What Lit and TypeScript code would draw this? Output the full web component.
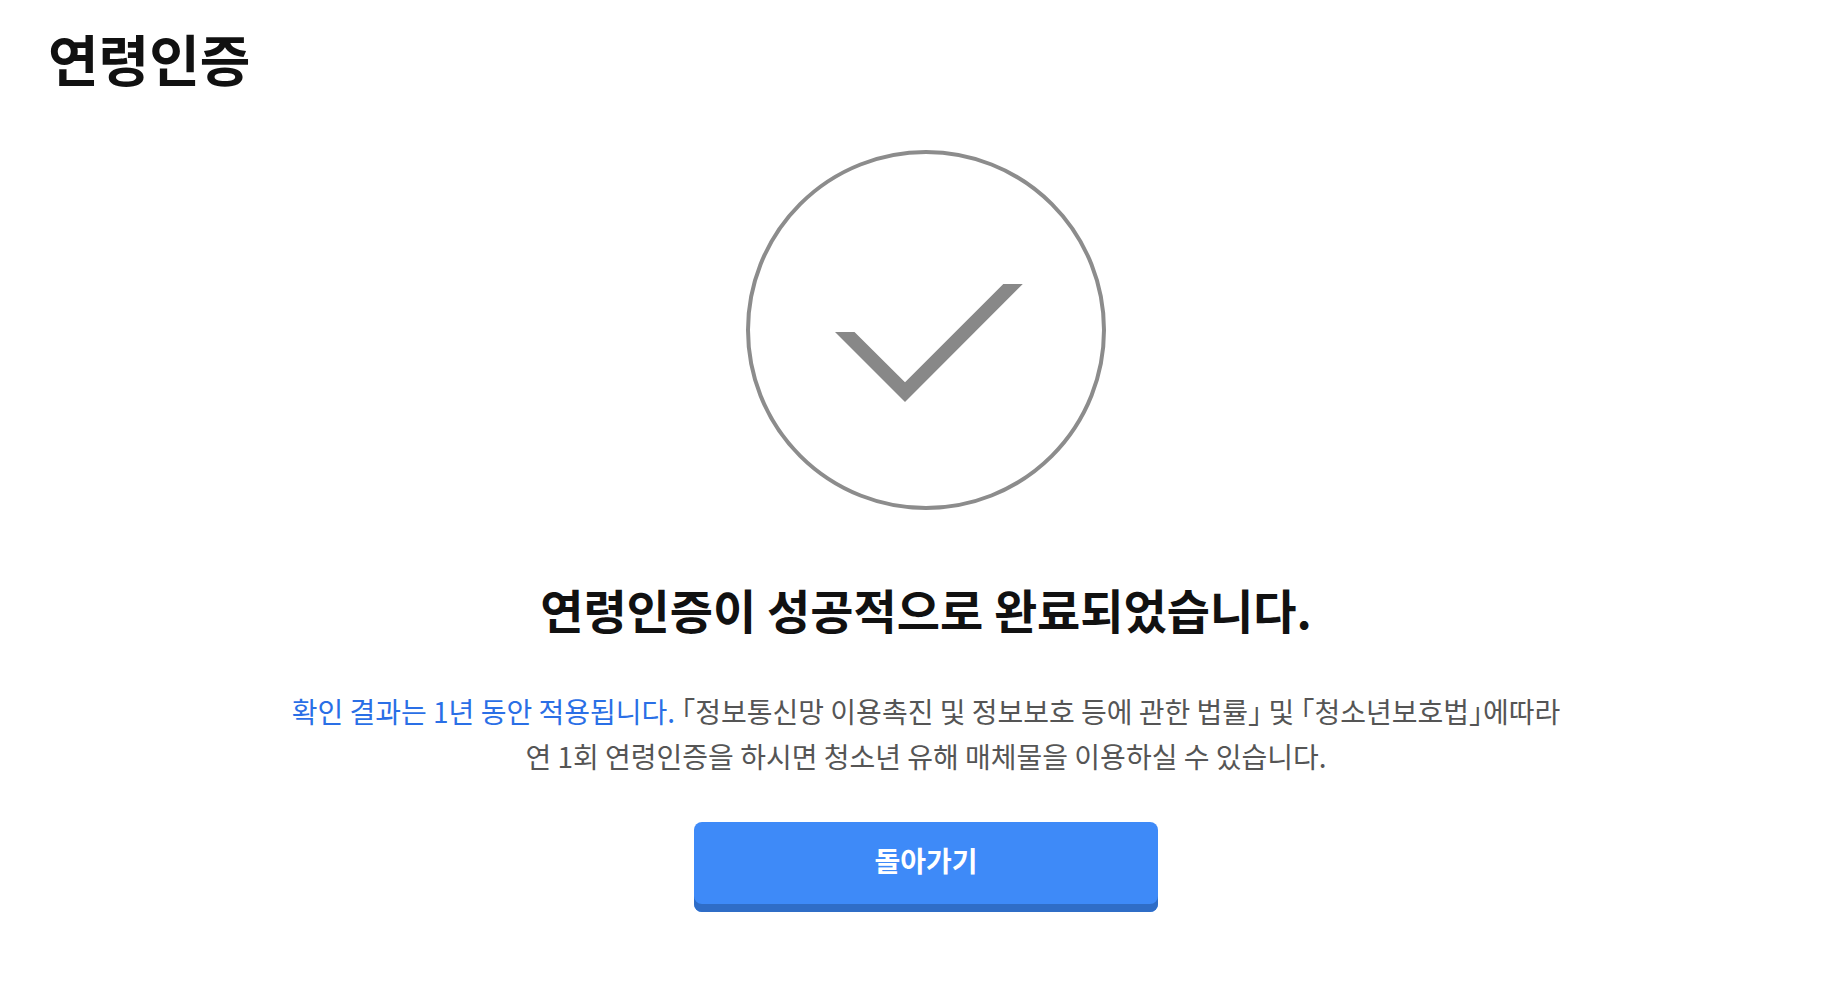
import { LitElement, html, css } from "lit";
import { customElement } from "lit/decorators.js";

@customElement("app-root")
export class AppRoot extends LitElement {
  static styles = css`
    :host {
      display: block;
      background: #fff;
      color: #111;
      font-family: "Noto Sans CJK KR", "Noto Sans", sans-serif;
    }
    .header { padding: 17px 48px 0; }
    .title { margin: 0; font-size: 55px; line-height: 80px; font-weight: 700; }
    .content {
      display: flex;
      flex-direction: column;
      align-items: center;
      padding: 53px 20px 48px 24px;
      text-align: center;
    }
    .icon { display: block; width: 360px; height: 360px; }
    .result { margin: 63px 0 0; font-size: 47px; line-height: 72px; font-weight: 700; }
    .notice {
      margin: 44px 0 0;
      font-size: 28px;
      line-height: 45px;
      font-feature-settings: "halt";
      color: #555;
    }
    .highlight { color: #2a6fe6; }
    .back {
      width: 464px;
      max-width: 100%;
      height: 90px;
      margin: 43px 0 0;
      padding: 0 0 14px;
      border: 0;
      border-radius: 8px;
      background: #3e8af8;
      box-shadow: inset 0 -8px #2f6dc7;
      color: #fff;
      font: inherit;
      font-size: 28px;
      font-weight: 700;
      cursor: pointer;
    }
  `;

  render() {
    return html`
      <header class="header"><h1 class="title">연령인증</h1></header>
      <main class="content">
        <svg class="icon" viewBox="0 0 360 360" aria-hidden="true">
          <circle cx="180" cy="180" r="178" fill="none" stroke="#8c8c8c" stroke-width="4" />
          <path d="M89 182h19.500L159 232.300 257.300 134h19.500L159 252Z" fill="#888" />
        </svg>
        <h2 class="result">연령인증이 성공적으로 완료되었습니다.</h2>
        <p class="notice">
          <span class="highlight">확인 결과는 1년 동안 적용됩니다.</span> 「정보통신망 이용촉진 및 정보보호 등에 관한 법률」 및 「청소년보호법」에따라<br />
          연 1회 연령인증을 하시면 청소년 유해 매체물을 이용하실 수 있습니다.
        </p>
        <button class="back" type="button">돌아가기</button>
      </main>
    `;
  }
}
